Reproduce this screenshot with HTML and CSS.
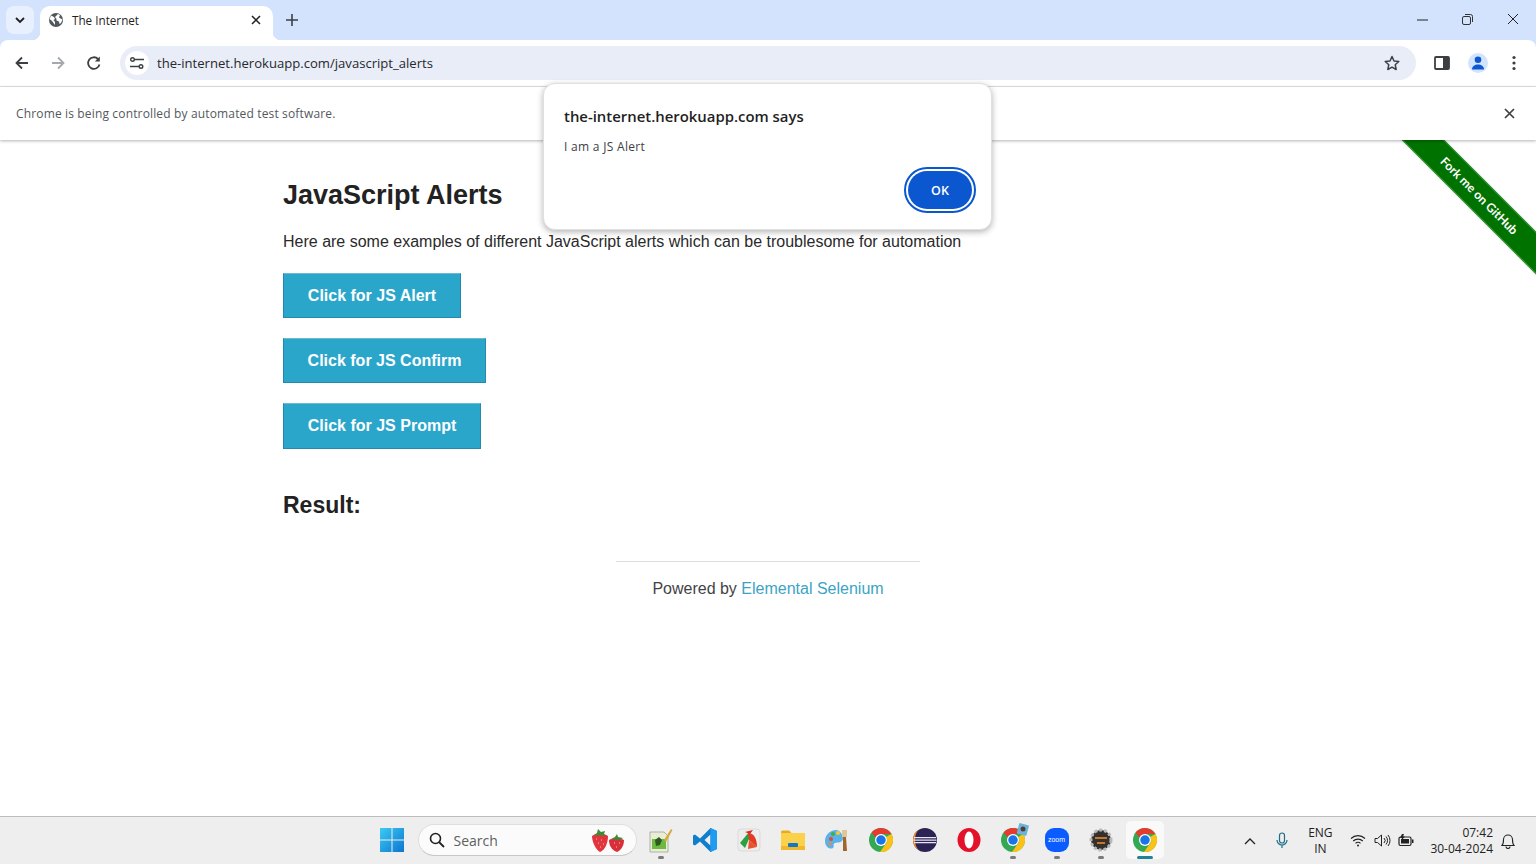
FILE: index.html
```html
<!DOCTYPE html>
<html lang="en">
<head>
<meta charset="utf-8">
<title>The Internet</title>
<link rel="stylesheet" href="styles.css">
</head>
<body>
<svg class="defs" width="0" height="0">
  <symbol id="chrome" viewBox="0 0 48 48">
    <circle cx="24" cy="24" r="24" fill="#34a853"/>
    <path d="M24 0a24 24 0 0 1 20.800 12H24a12 12 0 0 0-10.900 7L5.200 9A24 24 0 0 1 24 0z" fill="#e33b2e"/>
    <path d="M44.800 12A24 24 0 0 1 22 48l10.600-15A12 12 0 0 0 34 18z" fill="#fbc116"/>
    <circle cx="24" cy="24" r="12" fill="#fff"/>
    <circle cx="24" cy="24" r="9.500" fill="#1a73e8"/>
  </symbol>
</svg>
<div class="app">
  <header class="tabstrip">
    <div class="tabsearch">
      <svg width="12" height="12" viewBox="0 0 12 12"><path d="M2 4l4 4 4-4" fill="none" stroke="#1f1f1f" stroke-width="1.800"/></svg>
    </div>
    <div class="tab">
      <svg class="favicon" width="16" height="16" viewBox="0 0 16 16"><circle cx="8" cy="8" r="7" fill="#50565c"/><path d="M3 3.500l3 1.500 1 2-1.500 1 1.500 2v3L4 9 1.500 7zM10 2l2 1-1 2.500 2.500 1.500 1 .5-1.500 3.500-1.500 1-.5-2.500-2.500-1V7l-1.500-2z" fill="#fff"/></svg>
      <span class="tab-title">The Internet</span>
      <svg width="10" height="10" viewBox="0 0 10 10"><path d="M1 1l8 8M9 1l-8 8" stroke="#1f1f1f" stroke-width="1.500"/></svg>
    </div>
    <svg class="newtab" width="12" height="12" viewBox="0 0 12 12"><path d="M6 0v12M0 6h12" stroke="#3c4043" stroke-width="1.600"/></svg>
    <div class="winctl">
      <svg width="11" height="11" viewBox="0 0 11 11"><path d="M0 6h11" stroke="#222" stroke-width="1"/></svg>
      <svg width="11" height="11" viewBox="0 0 11 11"><rect x=".5" y="2.500" width="8" height="8" rx="1.500" fill="none" stroke="#333"/><path d="M3 .5h5.500a2 2 0 0 1 2 2V8" fill="none" stroke="#333"/></svg>
      <svg width="12" height="12" viewBox="0 0 12 12"><path d="M1 1l10 10M11 1L1 11" stroke="#222" stroke-width="1"/></svg>
    </div>
  </header>
  <nav class="toolbar">
    <svg class="navicon" width="16" height="16" viewBox="0 0 16 16"><path d="M14 8H3M8 2.500L2.500 8 8 13.500" fill="none" stroke="#3c4043" stroke-width="1.800"/></svg>
    <svg class="navicon" width="16" height="16" viewBox="0 0 16 16"><path d="M2 8h11M8 2.500L13.500 8 8 13.500" fill="none" stroke="#a5a8ac" stroke-width="1.800"/></svg>
    <svg class="navicon" width="16" height="16" viewBox="0 0 16 16"><path d="M13.500 9.500A5.800 5.800 0 1 1 12 4" fill="none" stroke="#3c4043" stroke-width="1.800"/><path d="M13.800 1.500v5h-5z" fill="#3c4043"/></svg>
    <div class="omnibox">
      <span class="site-chip">
        <svg width="14" height="14" viewBox="0 0 14 14" fill="none" stroke="#3c4043" stroke-width="1.400"><path d="M4 3.500h10M10 10.500H0"/><circle cx="2.500" cy="3.500" r="1.800" fill="#fff"/><circle cx="11" cy="10.500" r="1.800" fill="#fff"/></svg>
      </span>
      <span class="url">the-internet.herokuapp.com/javascript_alerts</span>
      <svg class="star" width="16" height="16" viewBox="0 0 16 16"><path d="M8 1.500l2 4.500 4.800.5-3.600 3.200 1 4.800L8 12.100l-4.200 2.400 1-4.800L1.200 6.500 6 6z" fill="none" stroke="#3c4043" stroke-width="1.500" stroke-linejoin="round"/></svg>
    </div>
    <div class="tools">
      <svg width="16" height="14" viewBox="0 0 16 14"><rect x="1" y="1" width="14" height="12" rx="1" fill="#fff" stroke="#3c4043" stroke-width="1.800"/><rect x="9" y="1" width="6" height="12" fill="#3c4043"/></svg>
      <span class="avatar"><svg width="16" height="14" viewBox="0 0 16 14"><circle cx="8" cy="3.800" r="3.300" fill="#0b57d0"/><path d="M2 13.500c0-3.500 3-5 6-5s6 1.500 6 5z" fill="#0b57d0"/></svg></span>
      <svg width="4" height="16" viewBox="0 0 4 16"><circle cx="2" cy="2.500" r="1.600" fill="#3c4043"/><circle cx="2" cy="8" r="1.600" fill="#3c4043"/><circle cx="2" cy="13.500" r="1.600" fill="#3c4043"/></svg>
    </div>
  </nav>
  <div class="infobar">
    <span>Chrome is being controlled by automated test software.</span>
    <svg width="11" height="11" viewBox="0 0 11 11"><path d="M1 1l9 9M10 1l-9 9" stroke="#3c4043" stroke-width="1.700"/></svg>
  </div>
  <main class="page">
    <div class="content">
      <h3 class="title">JavaScript Alerts</h3>
      <p class="lead">Here are some examples of different JavaScript alerts which can be troublesome for automation</p>
      <ul class="actions">
        <li><button class="btn btn-a">Click for JS Alert</button></li>
        <li><button class="btn btn-b">Click for JS Confirm</button></li>
        <li><button class="btn btn-c">Click for JS Prompt</button></li>
      </ul>
      <h4 class="result">Result:</h4>
    </div>
    <footer class="foot">
      <hr class="rule">
      <p class="powered">Powered by <a class="link">Elemental Selenium</a></p>
    </footer>
    <div class="ribbon"><span>Fork me on GitHub</span></div>
  </main>
  <footer class="taskbar">
    <div></div>
    <div class="dock">
      <span class="dk first"><svg width="24" height="24" viewBox="0 0 24 24"><defs><linearGradient id="w" x1="0" y1="0" x2="1" y2="1"><stop offset="0" stop-color="#3ccbf4"/><stop offset="1" stop-color="#0b75cf"/></linearGradient></defs><path d="M0 0h11.500v11.500H0zM12.500 0H24v11.500H12.500zM0 12.500h11.500V24H0zM12.500 12.500H24V24H12.500z" fill="url(#w)"/></svg></span>
      <div class="search">
        <svg width="16" height="16" viewBox="0 0 16 16"><circle cx="6.500" cy="6.500" r="5" fill="none" stroke="#222" stroke-width="1.600"/><path d="M10 10l5 5" stroke="#222" stroke-width="1.800"/></svg>
        <span class="search-label">Search</span>
        <svg class="berries" width="34" height="24" viewBox="0 0 34 24"><path d="M1 8c4-3 12-3 16 0 0 7-3 14-8 16C5 22 1 14 1 8z" fill="#e2343f"/><path d="M3 7l3-2 1-4 3 3 4-1-1 3 2 2z" fill="#3d8b37"/><path d="M18 12c3-2 11-2 15 0 0 6-3 10-7 12-5-2-8-6-8-12z" fill="#d92f3b"/><path d="M20 11l4-2 2-3 1 3 5 1-3 2z" fill="#3d8b37"/><path d="M5 11h1M10 12h1M7 15h1M12 16h1M9 19h1M23 15h1M28 15h1M25 19h1" stroke="#f6c9a0" stroke-width="1"/></svg>
      </div>
      <span class="dk run"><svg width="24" height="26" viewBox="0 0 24 26"><path d="M1 5h14l4 4v16H1z" fill="#e9edd8" stroke="#9aa38a" stroke-width=".8"/><path d="M3 12h14v10H3z" fill="#6eb93f"/><path d="M6 13l4-3 3 3-2 5-4 1z" fill="#2c5b22"/><path d="M15 13L22 2l1.500 1L17 15z" fill="#d9a93a"/></svg></span>
      <span class="dk"><svg width="26" height="26" viewBox="0 0 26 26"><path d="M18.500 1L25 4v18l-6.500 3L8 14.500 3 18.500 1 17.500v-9L3 7.500l5 4zM18.500 7.500L12.500 13l6 5.500z" fill="#0f7fcb" fill-rule="evenodd"/><path d="M18.500 1L25 4v18l-6.500 3v-6.500V7.500z" fill="#1f9cf0"/></svg></span>
      <span class="dk"><svg width="24" height="24" viewBox="0 0 24 24"><rect x="1" y="1" width="22" height="22" rx="3" fill="#ededed" stroke="#ccc" stroke-width=".6"/><path d="M12 4L3 15l5 5 4-9z" fill="#2da13f"/><path d="M11 5c6 0 9 6 9 14l-8-7z" fill="#e23b26"/><path d="M12 12l8 7-9 2z" fill="#e9542f"/><path d="M8 4l8-2-3 4z" fill="#d92b20"/></svg></span>
      <span class="dk"><svg width="26" height="22" viewBox="0 0 26 22"><path d="M1 3a1.500 1.500 0 0 1 1.500-1.500H9l2.500 2.500H1z" fill="#e9a920"/><path d="M1 4h24v17H1z" fill="#fbd14b"/><path d="M1 17h24v4H1z" fill="#f3b82a"/><rect x="8" y="14" width="10" height="4" rx="1" fill="#1277c9"/></svg></span>
      <span class="dk"><svg width="24" height="26" viewBox="0 0 24 26"><path d="M11 3C5 3 0 8 0 14c0 6 5 9 8 7 2-2-1-4 2-5 3-1 5 0 7-2 3-3-1-11-6-11z" fill="#5ab2e8"/><circle cx="6" cy="12" r="2" fill="#e04b3b"/><circle cx="8" cy="7" r="2" fill="#3fae49"/><circle cx="13" cy="6" r="2" fill="#f6c92f"/><circle cx="5" cy="17" r="1.600" fill="#f28b2e"/><path d="M18 10h3l1 14h-4z" fill="#a2662c"/><path d="M17 3h5v7h-5z" fill="#e0c79a"/></svg></span>
      <span class="dk"><svg width="24" height="24"><use href="#chrome"/></svg></span>
      <span class="dk"><svg width="24" height="24" viewBox="0 0 24 24"><circle cx="12" cy="12" r="12" fill="#2c2355"/><path d="M0 12a12 12 0 0 1 6-10.400A14 14 0 0 0 2 12a14 14 0 0 0 4 10.400A12 12 0 0 1 0 12z" fill="#f0922b"/><path d="M1 9h22v1.300H1zM.5 11.500h23v1.300H.5zM1 14h22v1.300H1z" fill="#e8e6f2"/></svg></span>
      <span class="dk"><svg width="24" height="24" viewBox="0 0 24 24"><ellipse cx="12" cy="12" rx="11.500" ry="12" fill="#e3122a"/><ellipse cx="12" cy="12" rx="4.500" ry="8.500" fill="#fff"/></svg></span>
      <span class="dk run">
        <svg width="24" height="24"><use href="#chrome"/></svg>
        <svg class="badge" width="14" height="15" viewBox="0 0 14 15"><rect x="2" y="2" width="10" height="11" rx="1" fill="#68b4de" transform="rotate(15 7 7)"/><circle cx="7" cy="7" r="2.500" fill="#5a3a2c"/></svg>
      </span>
      <span class="dk run"><svg width="24" height="24" viewBox="0 0 24 24"><rect width="24" height="24" rx="9" fill="#0b5cff"/></svg><span class="zoomword">zoom</span></span>
      <span class="dk run"><svg width="24" height="24" viewBox="0 0 24 24"><circle cx="12" cy="12" r="10" fill="#33302d" stroke="#b9b9b9" stroke-width="3" stroke-dasharray="3 2"/><path d="M6 9h12v2H6zM8 14h8v2H8z" fill="#c9752a"/></svg></span>
      <span class="dk active"><svg width="24" height="24"><use href="#chrome"/></svg></span>
    </div>
    <div class="tray">
      <svg class="tr-chev" width="12" height="8" viewBox="0 0 12 8"><path d="M1 7l5-5 5 5" fill="none" stroke="#222" stroke-width="1.300"/></svg>
      <svg class="tr-mic" width="12" height="17" viewBox="0 0 12 17"><rect x="3.500" y="1" width="5" height="10" rx="2.500" fill="none" stroke="#1b6f86" stroke-width="1.200"/><path d="M1 8a5 5 0 0 0 10 0M6 13v3" fill="none" stroke="#1b6f86" stroke-width="1.200"/></svg>
      <div class="lang"><span>ENG</span><span>IN</span></div>
      <svg class="tr-wifi" width="16" height="13" viewBox="0 0 16 13"><path d="M1 4.500a10 10 0 0 1 14 0M3.200 7a7 7 0 0 1 9.600 0M5.500 9.300a3.500 3.500 0 0 1 5 0" fill="none" stroke="#222" stroke-width="1.100"/><circle cx="8" cy="11.500" r="1" fill="#222"/></svg>
      <svg class="tr-vol" width="17" height="13" viewBox="0 0 17 13"><path d="M1 4.500h2.500L7.500 1v11L3.500 8.500H1z" fill="none" stroke="#222"/><path d="M10 4a3.500 3.500 0 0 1 0 5M12 2.500a6 6 0 0 1 0 8M14 1a8.500 8.500 0 0 1 0 11" fill="none" stroke="#222"/></svg>
      <svg class="tr-bat" width="16" height="13" viewBox="0 0 16 13"><rect x="1" y="3" width="12" height="8.500" rx="1.500" fill="none" stroke="#222" stroke-width="1.200"/><rect x="3" y="5" width="8" height="4.500" fill="#222"/><path d="M14 5.500h1.500v3.500H14z" fill="#222"/><path d="M4 0L2 4h2L3 7l4-4.500H5L6 0z" fill="#222"/></svg>
      <div class="clock"><span>07:42</span><span>30-04-2024</span></div>
      <svg class="tr-bell" width="14" height="16" viewBox="0 0 14 16"><path d="M1 12.500c1.500-1.500 1.500-3 1.500-6a4.500 4.500 0 0 1 9 0c0 3 0 4.500 1.500 6zM5 13.500a2 2 0 0 0 4 0" fill="none" stroke="#222" stroke-width="1.100"/></svg>
    </div>
  </footer>
  <div class="dialog" role="alertdialog">
    <h2 class="dlg-title">the-internet.herokuapp.com says</h2>
    <p class="dlg-msg">I am a JS Alert</p>
    <div class="dlg-actions"><button class="ok">OK</button></div>
  </div>
</div>
</body>
</html>
```
FILE: styles.css
```css
* { box-sizing: border-box; }
html, body { margin: 0; padding: 0; height: 100%; overflow: hidden; background: #fff; }
.defs { position: absolute; }
.app { position: relative; width: 1536px; height: 864px; display: flex; flex-direction: column; background: #d3e3fd; font-family: "Open Sans", "Noto Sans", sans-serif; color: #1f1f1f; }

.tabstrip { height: 40px; flex: none; background: #d3e3fd; display: flex; align-items: flex-end; padding-left: 6px; position: relative; }
.tabsearch { width: 28px; height: 28px; margin: 0 6px 6px 0; border-radius: 8px; background: #e9f0fd; display: flex; align-items: center; justify-content: center; }
.tab { width: 233px; height: 34px; background: #fff; border-radius: 10px 10px 0 0; display: flex; align-items: center; padding: 0 12px 6px 8px; position: relative; }
.tab::before, .tab::after { content: ""; position: absolute; bottom: 0; width: 8px; height: 8px; }
.tab::before { left: -8px; background: radial-gradient(circle at 0 0, transparent 8px, #fff 8.500px); }
.tab::after { right: -8px; background: radial-gradient(circle at 100% 0, transparent 8px, #fff 8.500px); }
.favicon { flex: none; }
.tab-title { flex: 1; margin-left: 8px; font-size: 11.700px; white-space: nowrap; }
.newtab { margin: 0 0 14px 13px; }
.winctl { margin-left: auto; height: 40px; display: flex; align-items: center; gap: 34px; padding-right: 17px; padding-bottom: 2px; }

.toolbar { height: 47px; flex: none; background: #fff; border-bottom: 1px solid #e3e3e3; display: flex; align-items: center; padding: 0 14px 1px 14px; gap: 20px; border-radius: 8px 8px 0 0; }
.navicon { flex: none; }
.omnibox { width: 1296px; height: 34px; margin-left: -2px; border-radius: 17px; background: #e9edf8; display: flex; align-items: center; padding: 0 16px 0 5px; }
.site-chip { width: 24px; height: 24px; border-radius: 50%; background: #fff; display: flex; align-items: center; justify-content: center; flex: none; }
.url { flex: 1; margin-left: 8px; padding-top: 1px; font-size: 13.100px; color: #26282c; white-space: nowrap; }
.star { flex: none; }
.tools { display: flex; align-items: center; margin-left: -2px; }
.tools > svg:first-child { margin-right: 10px; }
.avatar { width: 20px; height: 20px; border-radius: 50%; background: #d3e3fd; display: flex; align-items: center; justify-content: center; margin-right: 24px; margin-left: 8px; }

.infobar { height: 53px; flex: none; background: #fff; display: flex; align-items: center; justify-content: space-between; padding: 0 21px 0 16px; font-size: 12px; letter-spacing: .15px; color: #54585d; box-shadow: 0 1px 3px rgba(0,0,0,.3); position: relative; z-index: 1; }

.page { flex: 1; min-height: 0; position: relative; overflow: hidden; background: #fff; font-family: "Liberation Sans", Arial, sans-serif; color: #2a2a2a; padding: 38px 283px 0; }
.title { margin: 0; font-size: 27px; line-height: 34px; font-weight: 700; color: #222; }
.lead { margin: 18px 0 0; font-size: 16px; line-height: 24px; }
.actions { list-style: none; margin: 19px 0 0; padding: 0; display: flex; flex-direction: column; gap: 20px; align-items: flex-start; }
.actions li { display: block; }
.btn { display: block; height: 45px; padding: 0; white-space: nowrap; border: 1px solid #2489ad; border-top-color: #6fb8d3; background: #2ba6cb; color: #fff; font: 700 16px "Liberation Sans", Arial, sans-serif; }
.btn-a { width: 178px; }
.btn-b { width: 203px; }
.btn-c { width: 198px; height: 46px; }
.result { margin: 40px 0 0; font-size: 23px; line-height: 32px; font-weight: 700; color: #222; }
.foot { width: 304px; margin: 40px auto 0; text-align: center; }
.rule { margin: 0; border: 0; border-top: 1px solid #ddd; }
.powered { margin: 15px -20px 0; font-size: 16px; line-height: 24px; color: #444; }
.link { color: #3ba4c6; }

.ribbon { position: absolute; top: 41px; right: -68px; width: 250px; height: 30px; transform: rotate(45deg); background: #007200; border-top: 1px solid #2f942f; border-bottom: 1px solid #3f9f3f; box-shadow: 0 0 2px rgba(0,0,0,.3); color: #fff; font: 700 12.200px/28px "Lato", "Noto Sans", sans-serif; text-align: center; }
.ribbon span { display: block; }

.taskbar { height: 48px; flex: none; background: #eeeeee; border-top: 1px solid #bdbdbd; display: grid; grid-template-columns: 1fr auto 1fr; align-items: center; }
.dock { display: flex; align-items: center; height: 47px; padding-bottom: 1px; }
.dk { width: 44px; height: 38px; display: flex; align-items: center; justify-content: center; position: relative; flex: none; }
.dk.first { margin-right: 5px; }
.dk.run::after { content: ""; position: absolute; left: 19px; bottom: 0; width: 6px; height: 3px; border-radius: 2px; background: #7a7a7a; }
.dk.active { width: 38px; margin: 0 3px; background: #f9f9f9; border-radius: 5px; }
.dk.active::after { content: ""; position: absolute; left: 11px; bottom: 0; width: 16px; height: 3px; border-radius: 2px; background: #1f8296; }
.badge { position: absolute; top: 1px; right: 5px; }
.zoomword { position: absolute; left: 0; right: 0; top: 14px; text-align: center; color: #fff; font: 400 7px/10px "Liberation Sans", sans-serif; }
.search { width: 219px; height: 32px; margin: 0 2px 0 -1px; border-radius: 16px; background: #fbfbfb; border: 1px solid #dedede; border-bottom-color: #c8c8c8; display: flex; align-items: center; padding: 0 11px 0 10px; }
.search-label { flex: 1; margin-left: 9px; font-size: 14px; color: #5f5f5f; }

.tray { justify-self: end; display: flex; align-items: center; height: 47px; font-size: 12px; color: #222; }
.tray > svg { flex: none; }
.tr-chev { margin-right: 20px; }
.tr-mic { margin-right: 19px; }
.lang { width: 26px; display: flex; flex-direction: column; align-items: center; line-height: 16px; margin-right: 17px; }
.tr-wifi { margin-right: 8px; }
.tr-vol { margin-right: 7px; }
.tr-bat { margin-right: 16px; }
.clock { display: flex; flex-direction: column; align-items: flex-end; line-height: 16px; margin-right: 8px; }
.tr-bell { margin-right: 21px; }

.dialog { position: absolute; left: 543px; top: 83px; width: 449px; height: 147px; background: #fff; border-radius: 12px; border: 1px solid #e0e0e0; box-shadow: 0 2px 6px rgba(0,0,0,.3); padding: 21px 16px 0 20px; z-index: 5; }
.dlg-title { margin: 0; font-size: 14.900px; line-height: 22px; font-weight: 600; color: #1f1f1f; }
.dlg-msg { margin: 11px 0 0; font-size: 12px; letter-spacing: .3px; line-height: 18px; color: #3c4043; }
.dlg-actions { display: flex; justify-content: flex-end; margin-top: 15px; }
.ok { width: 64px; height: 38px; border: 0; border-radius: 19px; background: #0b57d0; color: #fff; font: 600 12.500px "Open Sans", sans-serif; outline: 2px solid #0b57d0; outline-offset: 2px; margin-right: 3px; }
```
